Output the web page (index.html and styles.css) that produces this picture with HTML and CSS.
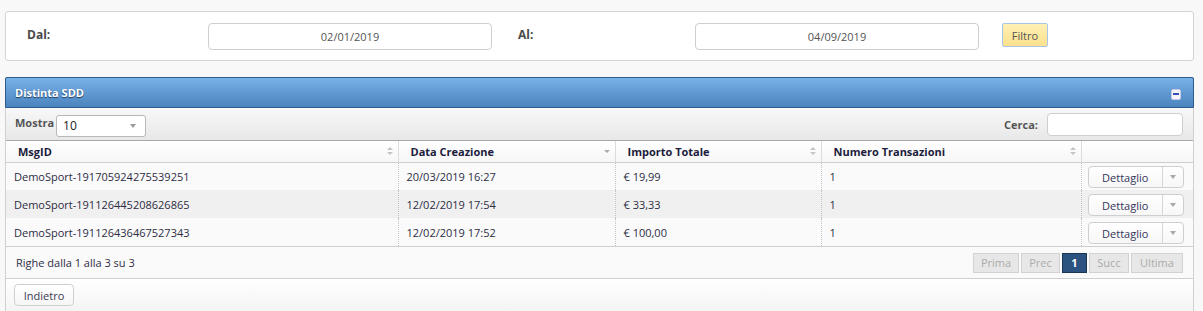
FILE: index.html
```html
<!DOCTYPE html>
<html lang="it">
<head>
<meta charset="utf-8">
<title>Distinta SDD</title>
<link rel="stylesheet" href="styles.css">
</head>
<body>
<div class="page">
  <div class="filter">
    <span class="flabel">Dal:</span>
    <div class="finput">02/01/2019</div>
    <span class="flabel">Al:</span>
    <div class="finput">04/09/2019</div>
    <button class="btn-filtro">Filtro</button>
  </div>

  <div class="panel">
    <div class="panel-head">
      <span class="ptitle">Distinta SDD</span>
      <span class="collapse"><span class="bar"></span></span>
    </div>
    <div class="toolbar">
      <div class="tl">
        <span class="tlabel">Mostra</span>
        <div class="select"><span>10</span><span class="caret"></span></div>
      </div>
      <div class="tr">
        <span class="tlabel">Cerca:</span>
        <div class="search"></div>
      </div>
    </div>
    <table class="grid">
      <colgroup>
        <col class="c1"><col class="c2"><col class="c3"><col class="c4"><col class="c5">
      </colgroup>
      <thead>
        <tr>
          <th><span>MsgID</span><span class="sort both"></span></th>
          <th><span>Data Creazione</span><span class="sort desc"></span></th>
          <th><span>Importo Totale</span><span class="sort both"></span></th>
          <th><span>Numero Transazioni</span><span class="sort both"></span></th>
          <th></th>
        </tr>
      </thead>
      <tbody>
        <tr class="odd">
          <td>DemoSport-191705924275539251</td>
          <td>20/03/2019 16:27</td>
          <td>€ 19,99</td>
          <td>1</td>
          <td class="act"><div class="split"><span class="main">Dettaglio</span><span class="drop"><span class="caret"></span></span></div></td>
        </tr>
        <tr class="even">
          <td>DemoSport-191126445208626865</td>
          <td>12/02/2019 17:54</td>
          <td>€ 33,33</td>
          <td>1</td>
          <td class="act"><div class="split"><span class="main">Dettaglio</span><span class="drop"><span class="caret"></span></span></div></td>
        </tr>
        <tr class="odd">
          <td>DemoSport-191126436467527343</td>
          <td>12/02/2019 17:52</td>
          <td>€ 100,00</td>
          <td>1</td>
          <td class="act"><div class="split"><span class="main">Dettaglio</span><span class="drop"><span class="caret"></span></span></div></td>
        </tr>
      </tbody>
    </table>
    <div class="footer">
      <span class="info">Righe dalla 1 alla 3 su 3</span>
      <div class="pager">
        <span class="pg dis w-prima">Prima</span>
        <span class="pg dis w-prec">Prec</span>
        <span class="pg cur">1</span>
        <span class="pg dis w-succ">Succ</span>
        <span class="pg dis w-ultima">Ultima</span>
      </div>
    </div>
    <div class="bottom">
      <button class="btn">Indietro</button>
    </div>
  </div>
</div>
</body>
</html>
```

FILE: styles.css
```css
* { box-sizing: border-box; }
html, body { margin: 0; padding: 0; }
body {
  background: #f8f8f8;
  font-family: "Open Sans", "DejaVu Sans", sans-serif;
  font-size: 11px;
  color: #333;
}
.page {
  width: 1189px;
  margin-left: 5px;
  padding-top: 11px;
}

/* filter box */
.filter {
  height: 50px;
  background: #fff;
  border: 1px solid #d4d4d4;
  border-radius: 3px;
  display: grid;
  grid-template-columns: 181px 284px 26px 177px 284px 23px 46px;
  align-items: center;
  padding-left: 21px;
}
.flabel {
  font-weight: bold;
  color: #4a4a4a;
  font-size: 12px;
  margin-top: -3px;
}
.filter .flabel:nth-of-type(2) { grid-column: 4; }
.finput {
  height: 27px;
  border: 1px solid #cfcfcf;
  border-radius: 4px;
  background: #fff;
  text-align: center;
  line-height: 25px;
  color: #555;
  font-size: 11px;
  margin-top: 1px;
}
.filter .finput:first-of-type { grid-column: 2; }
.filter .finput:last-of-type { grid-column: 5; }
.btn-filtro {
  grid-column: 7;
  width: 46px;
  height: 24px;
  margin-top: -2px;
  background: linear-gradient(#fff0b4, #fbe18d);
  border: 1px solid #a9c4ea;
  border-radius: 2px;
  font-family: inherit;
  font-size: 11px;
  color: #555;
  padding: 0;
}

/* panel */
.panel {
  margin-top: 16px;
  border-left: 1px solid #d0d0d0;
  border-right: 1px solid #d0d0d0;
}
.panel-head {
  height: 31px;
  margin: 0 -1px;
  background: linear-gradient(#78b0e8, #4b83be);
  border: 1px solid #2d5b8c;
  border-radius: 2px 2px 0 0;
  display: flex;
  align-items: center;
  justify-content: space-between;
  padding: 0 12px 0 9px;
}
.ptitle {
  color: #fff;
  font-weight: bold;
  font-size: 11px;
  text-shadow: 0 1px 1px #1c3c60;
  margin-top: -1px;
}
.collapse {
  width: 10px;
  height: 11px;
  background: #f4f4fa;
  border: 1px solid #c8c8e8;
  border-radius: 2px;
  display: flex;
  align-items: center;
  justify-content: center;
  margin-top: 3px;
}
.collapse .bar {
  width: 6px;
  height: 2px;
  background: #3a4fb5;
}

.toolbar {
  height: 33px;
  background: linear-gradient(#f8f8f8, #e8e8e8);
  border-bottom: 1px solid #a8a8a8;
  display: flex;
  align-items: center;
  justify-content: space-between;
  padding: 0 10px 0 9px;
}
.tl, .tr { display: flex; align-items: center; }
.tlabel {
  font-weight: bold;
  color: #555;
  font-size: 11px;
}
.tl .tlabel { margin-top: -4px; }
.select {
  margin-left: 2px;
  width: 90px;
  height: 22px;
  border: 1px solid #b8b8b8;
  border-radius: 3px;
  background: #fff;
  display: flex;
  align-items: center;
  justify-content: space-between;
  padding: 0 9px 0 6px;
  margin-top: 3px;
  font-size: 12px;
  color: #222;
}
.caret {
  width: 0;
  height: 0;
  border-left: 3px solid transparent;
  border-right: 3px solid transparent;
  border-top: 4px solid #9a9a9a;
}
.search {
  margin-left: 9px;
  width: 136px;
  height: 23px;
  border: 1px solid #cfcfcf;
  border-radius: 4px;
  background: #fff;
  margin-top: 1px;
}

/* table */
.grid {
  width: 100%;
  border-collapse: collapse;
  table-layout: fixed;
}
.c1 { width: 392px; }
.c2 { width: 217px; }
.c3 { width: 206px; }
.c4 { width: 260px; }
.grid th {
  height: 21px;
  background: linear-gradient(#ffffff, #f6f6f6);
  border-bottom: 1px solid #cfcfcf;
  border-right: 1px solid #dcdcdc;
  text-align: left;
  font-weight: bold;
  font-size: 11px;
  color: #1b1b3c;
  padding: 0 8px 0 12px;
  position: relative;
}
.grid th:last-child { border-right: none; }
.sort {
  position: absolute;
  right: 5px;
  top: 6px;
  width: 6px;
  height: 9px;
}
.sort.both::before, .sort.both::after {
  content: "";
  position: absolute;
  left: 0;
  border-left: 3px solid transparent;
  border-right: 3px solid transparent;
}
.sort.both::before { top: 0; border-bottom: 3px solid #c4c4c4; }
.sort.both::after { top: 5px; border-top: 3px solid #c4c4c4; }
.sort.desc::after {
  content: "";
  position: absolute;
  left: 0;
  top: 3px;
  border-left: 3px solid transparent;
  border-right: 3px solid transparent;
  border-top: 3px solid #aaa;
}
.grid td {
  height: 28px;
  padding: 0 8px;
  font-size: 11px;
  color: #2d2d44;
  border-right: 1px dotted #c4c4c4;
  white-space: nowrap;
}
.grid td:last-child { border-right: none; }
.grid tr.odd td { background: #fafafa; }
.grid tr.even td { background: #f0f0f0; }
.grid td.act { padding: 0 9px 0 6px; }
.split {
  display: flex;
  height: 22px;
  margin-top: 1px;
  border: 1px solid #cfcfcf;
  border-radius: 4px;
  background: linear-gradient(#ffffff, #f7f7f7);
  overflow: hidden;
}
.split .main {
  flex: 1;
  text-align: center;
  line-height: 21px;
  color: #34345a;
  font-size: 11px;
  border-right: 1px solid #d6d6d6;
}
.split .drop {
  width: 20px;
  display: flex;
  align-items: center;
  justify-content: center;
}
.split .caret { border-top-color: #a8a8a8; }

/* footer */
.footer {
  height: 33px;
  border-top: 1px solid #cfcfcf;
  border-bottom: 1px solid #cfcfcf;
  background: #fafafa;
  display: flex;
  align-items: center;
  justify-content: space-between;
  padding: 0 10px 0 10px;
}
.info { font-size: 11px; color: #2d2d44; }
.pager { display: flex; gap: 2px; }
.pg {
  height: 20px;
  line-height: 18px;
  border: 1px solid #d2d2d2;
  background: #e7e7e7;
  color: #ababab;
  font-size: 11px;
  text-align: center;
}
.w-prima { width: 46px; }
.w-prec { width: 39px; }
.w-succ { width: 40px; }
.w-ultima { width: 52px; }
.pg.cur {
  width: 25px;
  background: #2c527f;
  border-color: #1b3557;
  color: #fff;
  font-weight: bold;
}
.bottom {
  height: 32px;
  background: linear-gradient(#ffffff, #f4f4f4);
  padding: 5px 0 0 8px;
}
.btn {
  width: 60px;
  height: 22px;
  border: 1px solid #cfcfcf;
  border-radius: 4px;
  background: linear-gradient(#ffffff, #f6f6f6);
  font-family: inherit;
  font-size: 11px;
  color: #3a3a55;
  padding: 0;
}
```
